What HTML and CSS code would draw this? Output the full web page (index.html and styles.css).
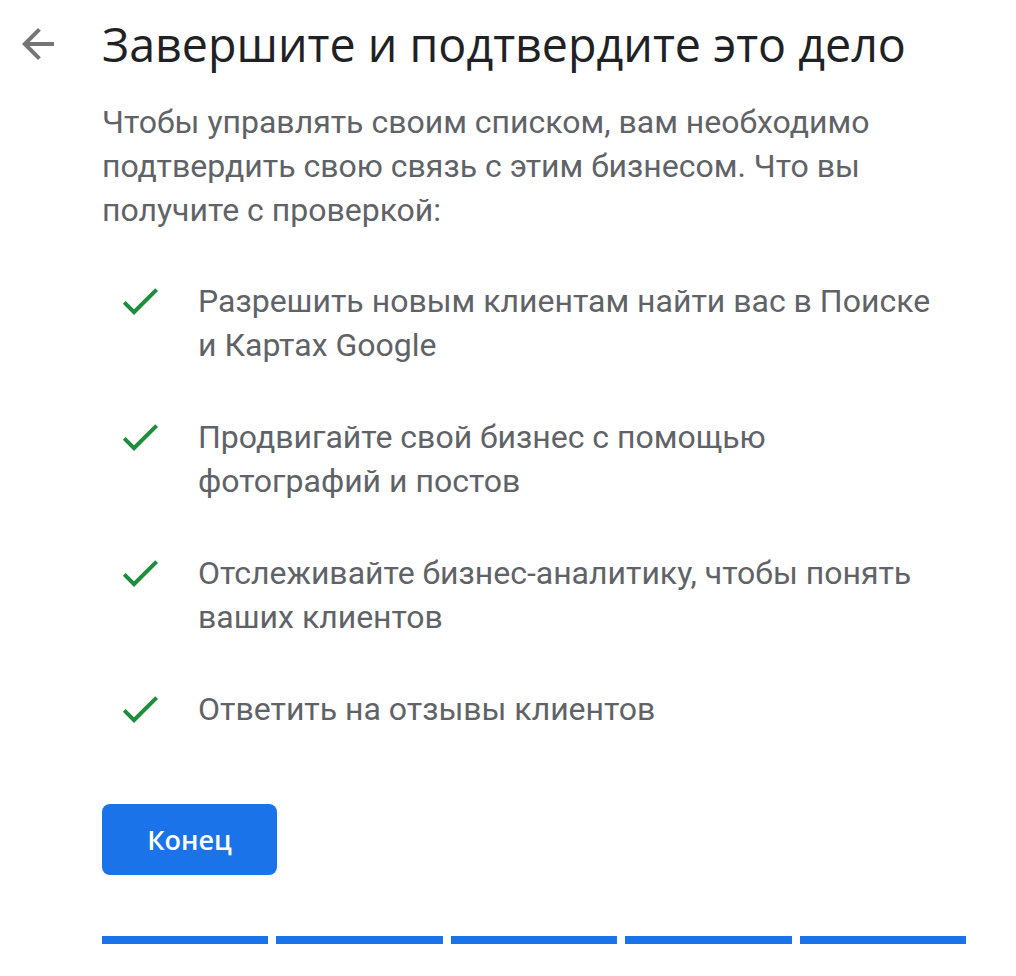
FILE: index.html
```html
<!DOCTYPE html>
<html lang="ru">
<head>
<meta charset="utf-8">
<link rel="stylesheet" href="styles.css">
</head>
<body>
<div class="page">
  <header class="header">
    <button class="back" aria-label="Назад">
      <svg viewBox="0 0 24 24" width="48" height="48"><path d="M20 11H7.83l5.59-5.59L12 4l-8 8 8 8 1.41-1.41L7.83 13H20v-2z" fill="#757575"/></svg>
    </button>
    <h1 class="title">Завершите и подтвердите это дело</h1>
  </header>
  <main class="content">
    <p class="intro">Чтобы управлять своим списком, вам необходимо подтвердить свою связь с этим бизнесом. Что вы получите с проверкой:</p>
    <ul class="benefits">
      <li class="benefit"><svg class="check" viewBox="0 0 24 24" width="48" height="48"><path d="M9 16.17L4.83 12l-1.42 1.41L9 19 21 7l-1.41-1.41z" fill="#1e8e3e"/></svg><span>Разрешить новым клиентам найти вас в Поиске и Картах Google</span></li>
      <li class="benefit"><svg class="check" viewBox="0 0 24 24" width="48" height="48"><path d="M9 16.17L4.83 12l-1.42 1.41L9 19 21 7l-1.41-1.41z" fill="#1e8e3e"/></svg><span>Продвигайте свой бизнес с помощью фотографий и постов</span></li>
      <li class="benefit"><svg class="check" viewBox="0 0 24 24" width="48" height="48"><path d="M9 16.17L4.83 12l-1.42 1.41L9 19 21 7l-1.41-1.41z" fill="#1e8e3e"/></svg><span>Отслеживайте бизнес-аналитику, чтобы понять ваших клиентов</span></li>
      <li class="benefit"><svg class="check" viewBox="0 0 24 24" width="48" height="48"><path d="M9 16.17L4.83 12l-1.42 1.41L9 19 21 7l-1.41-1.41z" fill="#1e8e3e"/></svg><span>Ответить на отзывы клиентов</span></li>
    </ul>
    <button class="finish">Конец</button>
    <div class="progress">
      <span class="seg"></span><span class="seg"></span><span class="seg"></span><span class="seg"></span><span class="seg"></span>
    </div>
  </main>
</div>
</body>
</html>
```
FILE: styles.css
```css
* { box-sizing: border-box; }
html, body { margin: 0; padding: 0; background: #fff; }
body { font-family: Roboto, "Liberation Sans", sans-serif; }
.page { width: 1016px; height: 976px; overflow: hidden; }
.header { display: flex; align-items: flex-start; padding: 12px 0 0 14px; }
.back { border: 0; background: none; padding: 0; margin: 8px 40px 0 0; width: 48px; height: 48px; display: block; }
.back svg { display: block; }
.title { margin: 0; font-family: "Open Sans", Roboto, sans-serif; font-weight: 400; font-size: 46.6px; line-height: 64px; color: #202124; letter-spacing: 0; }
.content { padding: 24px 0 0 102px; width: 980px; }
.intro { margin: 0; font-size: 32px; line-height: 44px; color: #5f6368; width: 800px; }
.benefits { list-style: none; margin: 47px 0 0; padding: 0; display: flex; flex-direction: column; gap: 48px; }
.benefit { display: flex; align-items: flex-start; font-size: 32px; line-height: 44px; color: #5f6368; }
.check { flex: none; margin: -2px 34px 0 14px; display: block; }
.benefit span { width: 745px; }
.finish { margin-top: 71px; width: 175px; height: 71px; border: 0; border-radius: 8px; background: #1a73e8; color: #fff; font-family: "Open Sans", Roboto, sans-serif; font-weight: 600; font-size: 27px; display: block; padding: 0; }
.progress { display: flex; gap: 8px; margin-top: 61px; width: 864px; }
.seg { flex: 1; height: 8px; background: #1a73e8; }
```
